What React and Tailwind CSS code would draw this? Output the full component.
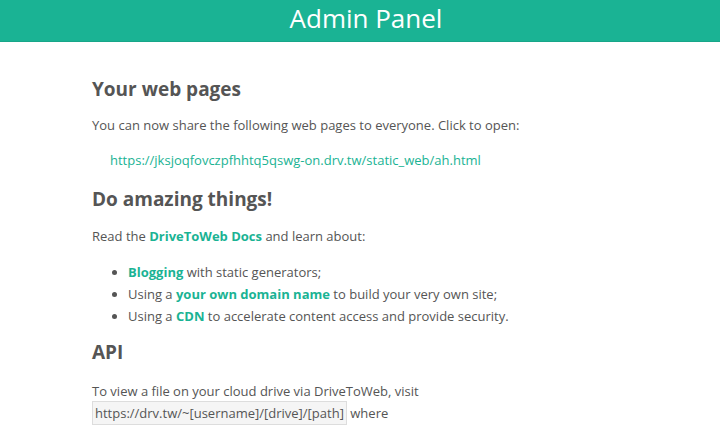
import React from 'react';

const teal = 'text-[#1ab394]';

const App = () => {
  return (
    <div className="min-h-[436px] bg-white font-['Open_Sans',sans-serif] text-[#555]">
      <header className="h-[42px] bg-[#1ab394] border-b border-[#18a689] text-center">
        <h1 className="pl-[12px] text-[26px] leading-[36px] text-white">Admin Panel</h1>
      </header>

      <main className="pl-[92px] pt-[35px]">
        <h2 className="text-[19px] leading-[24px] font-bold">Your web pages</h2>
        <p className="mt-[14px] text-[13px] leading-[20px]">
          You can now share the following web pages to everyone. Click to open:
        </p>
        <p className="mt-[15px] pl-[18px] text-[13px] leading-[20px]">
          <a className={teal}>https://jksjoqfovczpfhhtq5qswg-on.drv.tw/static_web/ah.html</a>
        </p>

        <h2 className="mt-[17px] text-[19px] leading-[24px] font-bold">Do amazing things!</h2>
        <p className="mt-[15px] text-[13px] leading-[20px]">
          Read the <a className={`${teal} font-bold`}>DriveToWeb Docs</a> and learn about:
        </p>
        <ul className="mt-[15px] pl-[36px] list-disc text-[13px] leading-[22px]">
          <li><a className={`${teal} font-bold`}>Blogging</a> with static generators;</li>
          <li>Using a <a className={`${teal} font-bold`}>your own domain name</a> to build your very own site;</li>
          <li>Using a <a className={`${teal} font-bold`}>CDN</a> to accelerate content access and provide security.</li>
        </ul>

        <h2 className="mt-[13px] text-[19px] leading-[24px] font-bold">API</h2>
        <p className="mt-[16px] text-[13px] leading-[22px]">
          To view a file on your cloud drive via DriveToWeb, visit
          <br />
          <code className="font-['Open_Sans',sans-serif] border border-[#ddd] bg-[#f5f5f5] px-[2px] py-[2px]">https://drv.tw/~[username]/[drive]/[path]</code> where
        </p>
      </main>
    </div>
  );
};

export default App;
